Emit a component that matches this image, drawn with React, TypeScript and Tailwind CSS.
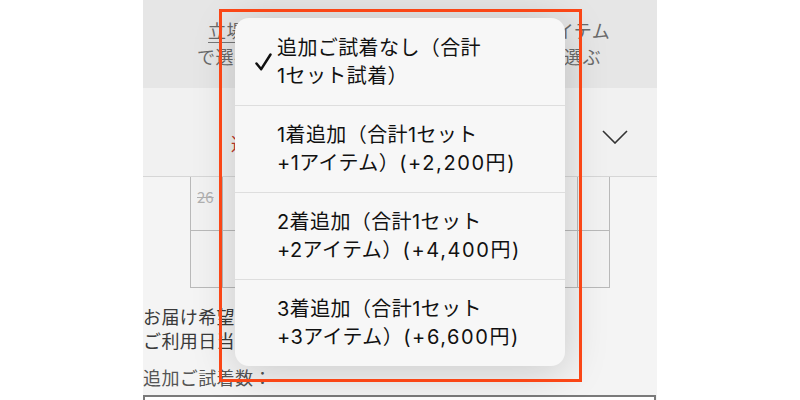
const options = [
  { first: "追加ご試着なし（合計", name: "1セット試着）", price: "", checked: true },
  { first: "1着追加（合計1セット", name: "+1アイテム）", price: "(+2,200円)", checked: false },
  { first: "2着追加（合計1セット", name: "+2アイテム）", price: "(+4,400円)", checked: false },
  { first: "3着追加（合計1セット", name: "+3アイテム）", price: "(+6,600円)", checked: false },
];

function Chevron() {
  return (
    <svg width="26" height="14" viewBox="0 0 26 14" fill="none">
      <path d="M1 1L13 13L25 1" stroke="#333" strokeWidth="1.6" />
    </svg>
  );
}

function CheckMark() {
  return (
    <svg width="17" height="18" viewBox="0 0 17 18" fill="none">
      <path d="M1.5 10.5L6.2 16.2L15.5 1.5" stroke="#111" strokeWidth="2.5" strokeLinecap="round" strokeLinejoin="round" />
    </svg>
  );
}

export default function App() {
  return (
    <div
      className="w-[800px] h-[400px] bg-white flex justify-center overflow-hidden"
      style={{ fontFamily: '"Noto Sans CJK JP", "Noto Sans", sans-serif' }}
    >
      <div className="relative w-[514px] h-full bg-[#f4f4f4] flex flex-col overflow-hidden">
        {/* Category header */}
        <div className="h-[88px] shrink-0 bg-[#e6e6e6] pt-[17px] text-[18px] leading-[26px] tracking-[0.4px] text-[#6a6a6a] whitespace-nowrap">
          <div className="pl-[65px]">
            <span className="underline underline-offset-4 decoration-[#777]">立場</span>
            やシーン別に選べるおすすめコーデアイテム
          </div>
          <div className="pl-[54px]">で選べるシーン・ご用途などのテーマからも選ぶ</div>
        </div>

        {/* Select row */}
        <div className="h-[89px] shrink-0 bg-[#f1f1f1] border-b border-[#d6d6d6] flex items-center justify-between pl-[88px] pr-[29px]">
          <span className="text-[18px] text-[#c0392b] mt-[22px]">選択してください</span>
          <span className="mt-[9px]">
            <Chevron />
          </span>
        </div>

        {/* Calendar cells */}
        <div className="shrink-0 pl-[47px]">
          <div className="w-[420px] grid grid-cols-[32px_1fr_32px] grid-rows-[54px_57px] border-l border-[#b9b9b9] bg-[#f2f2f2]">
            <div className="border-r border-b border-[#b9b9b9] pt-[12px] pl-[6px] text-[15px] text-[#b0b0b0] line-through leading-none">
              26
            </div>
            <div className="border-r border-b border-[#b9b9b9]" />
            <div className="border-r border-b border-[#b9b9b9]" />
            <div className="border-r border-b border-[#b9b9b9]" />
            <div className="border-r border-b border-[#b9b9b9]" />
            <div className="border-r border-b border-[#b9b9b9]" />
          </div>
        </div>

        {/* Notes */}
        <div className="mt-[16px] text-[18px] leading-[24px] tracking-[0.4px] text-[#3a3a3a] whitespace-nowrap">
          <div>お届け希望日の2日前までにお届けします。</div>
          <div>ご利用日当日の返却となります。</div>
        </div>
        <div className="mt-[13px] text-[18px] leading-[24px] tracking-[0.4px] text-[#555]">追加ご試着数：</div>
        <div className="mt-[6px] h-[40px] shrink-0 mr-[1px] border-2 border-[#7a7a7a] bg-white" />

        {/* Dropdown menu */}
        <div className="absolute left-[92px] top-[18px] w-[330px] rounded-[14px] bg-[#f7f7f7] shadow-[0_6px_44px_rgba(0,0,0,0.18)] overflow-hidden">
          {options.map((o, i) => (
            <div
              key={i}
              className={`h-[87px] flex items-center ${i > 0 ? "border-t border-[#dedede]" : ""}`}
            >
              <div className="w-[42px] shrink-0 pl-[20px]">{o.checked && <CheckMark />}</div>
              <div
                className="text-[20px] leading-[28px] tracking-[0.4px] text-[#111] whitespace-nowrap"
                style={{ fontFamily: 'Inter, "Noto Sans CJK JP", sans-serif' }}
              >
                <div>{o.first}</div>
                <div>
                  {o.name}
                  {o.price && <span className="tracking-[1.6px]">{o.price}</span>}
                </div>
              </div>
            </div>
          ))}
        </div>

        {/* Highlight frame */}
        <div className="absolute left-[76px] top-[9px] w-[363px] h-[373px] border-[3px] border-[#fa4616] pointer-events-none" />
      </div>
    </div>
  );
}
